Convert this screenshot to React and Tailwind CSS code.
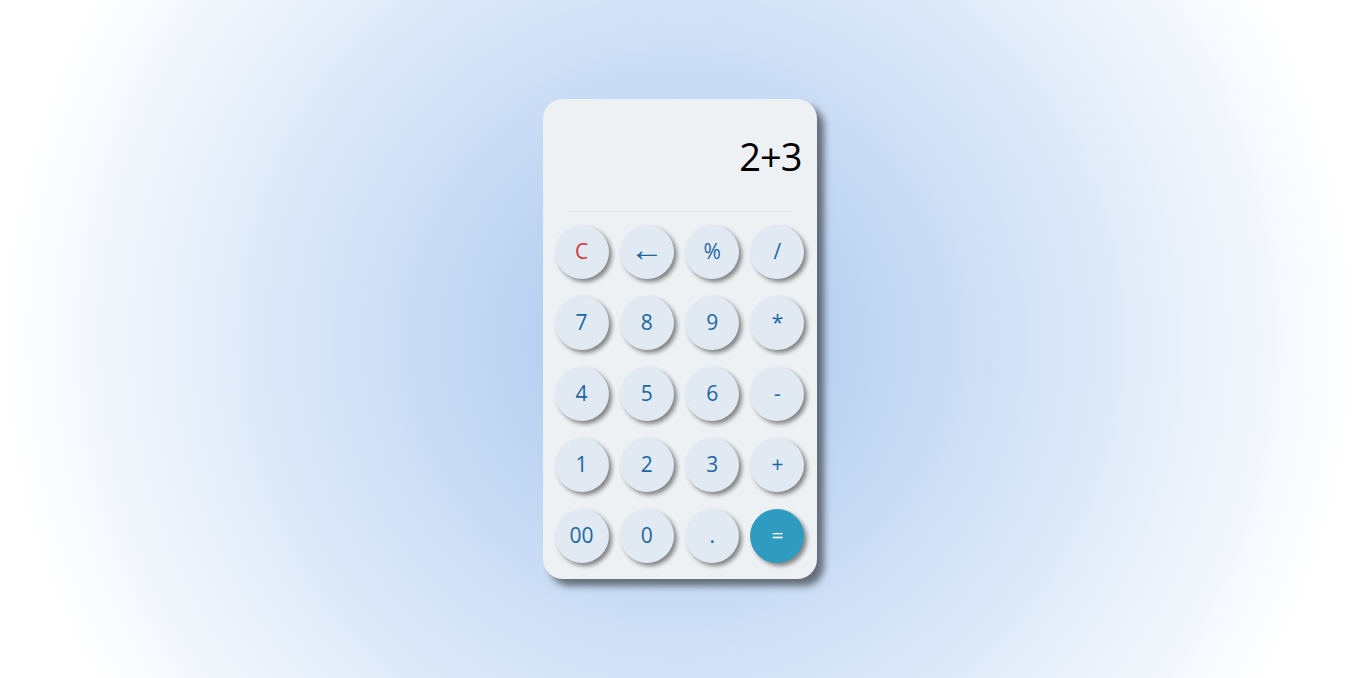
import React, { useState } from "react";

const keys = [
  ["C", "←", "%", "/"],
  ["7", "8", "9", "*"],
  ["4", "5", "6", "-"],
  ["1", "2", "3", "+"],
  ["00", "0", ".", "="],
];

function Key({ label, onPress }) {
  let color = "bg-[#e1eaf3] text-[#1c66a2]";
  if (label === "C") color = "bg-[#e1eaf3] text-[#d6363f]";
  if (label === "=") color = "bg-[#2f9bc1] text-white";
  const size = label === "←" ? "text-[34px] pb-[9px]" : "text-[21px] pb-[2px]";

  return (
    <button
      onClick={() => onPress(label)}
      className={`${color} ${size} w-[54px] h-[54px] rounded-full flex items-center justify-center leading-none shadow-[3px_3px_4px_rgba(0,0,0,0.45)]`}
    >
      {label}
    </button>
  );
}

export default function App() {
  const [expr, setExpr] = useState("2+3");

  const press = (k) => {
    if (k === "C") return setExpr("");
    if (k === "←") return setExpr((e) => e.slice(0, -1));
    if (k === "=") {
      try {
        // eslint-disable-next-line no-new-func
        setExpr(String(Function(`return (${expr})`)()));
      } catch {
        setExpr("Error");
      }
      return;
    }
    setExpr((e) => e + k);
  };

  return (
    <div className="w-full h-screen flex items-center justify-center bg-[radial-gradient(circle_farthest-side_at_center,#a7c6ee_0%,#ffffff_100%)] font-['Open_Sans',sans-serif]">
      <div className="w-[274px] bg-[#eef1f4] rounded-[20px] shadow-[7px_7px_7px_rgba(0,0,0,0.5)] px-3 pb-[16px]">
        <div className="h-[112px] flex items-end justify-end pr-[3px] pb-[36px] text-[38px] text-black leading-none tracking-tight">
          {expr}
        </div>
        <div className="mx-[13px] border-t border-[#dde1e5]" />
        <div className="grid grid-cols-4 gap-x-[11.3px] gap-y-[17px] mt-[13px]">
          {keys.flat().map((k) => (
            <Key key={k} label={k} onPress={press} />
          ))}
        </div>
      </div>
    </div>
  );
}
